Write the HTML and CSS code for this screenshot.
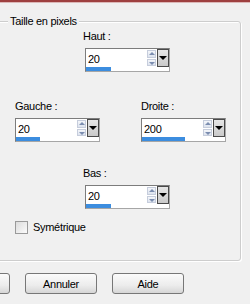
FILE: index.html
```html
<!DOCTYPE html>
<html lang="fr">
<head>
    <meta charset="UTF-8">
    <meta name="viewport" content="width=device-width, initial-scale=1.0">
    <title>Taille en pixels</title>
    <link rel="stylesheet" href="styles.css">
</head>
<body>
    <div class="topbar"></div>

    <div class="group">
        <span class="group-title">Taille en pixels</span>

        <div class="row row-haut">
            <div class="field">
                <label class="label-shift">Haut :</label>
                <div class="spin">
                    <div class="spin-top">
                        <input class="spin-input" type="text" value="20">
                        <div class="spin-arrows"><span class="arrow-up"></span><span class="arrow-down"></span></div>
                        <div class="spin-drop"><span class="drop-tri"></span></div>
                    </div>
                    <div class="spin-bar"><div class="spin-fill" style="width: 25px;"></div></div>
                </div>
            </div>
        </div>

        <div class="row row-sides">
            <div class="field">
                <label>Gauche :</label>
                <div class="spin">
                    <div class="spin-top">
                        <input class="spin-input" type="text" value="20">
                        <div class="spin-arrows"><span class="arrow-up"></span><span class="arrow-down"></span></div>
                        <div class="spin-drop"><span class="drop-tri"></span></div>
                    </div>
                    <div class="spin-bar"><div class="spin-fill" style="width: 24px;"></div></div>
                </div>
            </div>
            <div class="field">
                <label>Droite :</label>
                <div class="spin">
                    <div class="spin-top">
                        <input class="spin-input" type="text" value="200">
                        <div class="spin-arrows"><span class="arrow-up"></span><span class="arrow-down"></span></div>
                        <div class="spin-drop"><span class="drop-tri"></span></div>
                    </div>
                    <div class="spin-bar"><div class="spin-fill" style="width: 43px;"></div></div>
                </div>
            </div>
        </div>

        <div class="row row-bas">
            <div class="field">
                <label class="label-shift">Bas :</label>
                <div class="spin">
                    <div class="spin-top">
                        <input class="spin-input" type="text" value="20">
                        <div class="spin-arrows"><span class="arrow-up"></span><span class="arrow-down"></span></div>
                        <div class="spin-drop"><span class="drop-tri"></span></div>
                    </div>
                    <div class="spin-bar"><div class="spin-fill" style="width: 25px;"></div></div>
                </div>
            </div>
        </div>

        <div class="check-row">
            <span class="check-box"></span>
            <span>Symétrique</span>
        </div>
    </div>

    <div class="buttons">
        <button class="btn"></button>
        <button class="btn">Annuler</button>
        <button class="btn">Aide</button>
    </div>
</body>
</html>
```

FILE: styles.css
```css
body {
    margin: 0;
    background-color: #f0f0f0;
    font-family: "Liberation Sans", Arial, sans-serif;
    font-size: 11px;
    line-height: 13px;
    letter-spacing: -0.3px;
    color: #000;
    overflow: hidden;
}

.topbar {
    height: 2px;
    background-color: #9e4040;
    border-bottom: 1px solid #dcb8b8;
}

.group {
    position: relative;
    box-sizing: border-box;
    width: 247px;
    height: 240px;
    margin: 18px 0 0 -6px;
    padding: 8px 0 0 20px;
    border: 1px solid #cdcdcd;
    border-radius: 3px;
    box-shadow: 1px 1px 0 #fff, inset 1px 1px 0 #fff;
}

.group-title {
    position: absolute;
    top: -7px;
    left: 13px;
    padding: 0 2px;
    background-color: #f0f0f0;
}

.row {
    display: flex;
}

.row-haut {
    margin-left: 70px;
}

.row-sides {
    margin-top: 28px;
    gap: 41px;
}

.row-bas {
    margin-top: 25px;
    margin-left: 70px;
}

.field {
    display: flex;
    flex-direction: column;
}

.field label {
    margin-bottom: 5px;
}

.label-shift {
    margin-left: -2px;
}

.spin {
    width: 85px;
    height: 24px;
    box-sizing: border-box;
    border: 1px solid #a6a6a6;
    border-top-color: #7c7c7c;
    border-left-color: #7c7c7c;
    background-color: #fff;
}

.spin-top {
    display: flex;
    height: 18px;
}

.spin-input {
    width: 60px;
    height: 18px;
    box-sizing: border-box;
    border: none;
    padding: 2px 0 0 2px;
    margin: 0;
    font-family: inherit;
    font-size: 11px;
    letter-spacing: -0.3px;
    background: #fff;
    outline: none;
}

.spin-arrows {
    width: 11px;
    display: flex;
    flex-direction: column;
    padding-top: 1px;
}

.spin-arrows span {
    height: 7px;
    margin: 0 1px 1px 1px;
    border: 1px solid #c6cddc;
    background: linear-gradient(#f4f6fa, #dde3ee);
    position: relative;
}

.arrow-up::after,
.arrow-down::after {
    content: "";
    position: absolute;
    left: 1px;
    top: 1px;
    border-left: 3px solid transparent;
    border-right: 3px solid transparent;
}

.arrow-up::after {
    border-bottom: 3px solid #7b8db0;
}

.arrow-down::after {
    top: 2px;
    border-top: 3px solid #7b8db0;
}

.spin-drop {
    width: 12px;
    height: 18px;
    box-sizing: border-box;
    border: 1px solid #4a4a4a;
    background: linear-gradient(#e6e6e6, #c9c9c9);
    display: flex;
    align-items: center;
    justify-content: center;
}

.drop-tri {
    width: 0;
    height: 0;
    border-left: 4px solid transparent;
    border-right: 4px solid transparent;
    border-top: 4px solid #000;
}

.spin-bar {
    height: 4px;
    background-color: #fff;
}

.spin-fill {
    height: 4px;
    background-color: #3c8ddf;
}

.check-row {
    display: flex;
    align-items: center;
    gap: 5px;
    margin-top: 12px;
}

.check-box {
    width: 11px;
    height: 11px;
    border: 1px solid #9a9a9a;
    background: linear-gradient(135deg, #dcdcdc, #fbfbfb);
}

.buttons {
    display: flex;
    gap: 15px;
    margin: 12px 0 0 -62px;
}

.btn {
    width: 72px;
    height: 21px;
    padding: 0;
    font-family: inherit;
    font-size: 11px;
    letter-spacing: -0.3px;
    color: #000;
    border: 1px solid #777;
    border-radius: 3px;
    background: linear-gradient(#fbfbfb, #ececec 60%, #d6d6d6);
    flex-shrink: 0;
}
```
